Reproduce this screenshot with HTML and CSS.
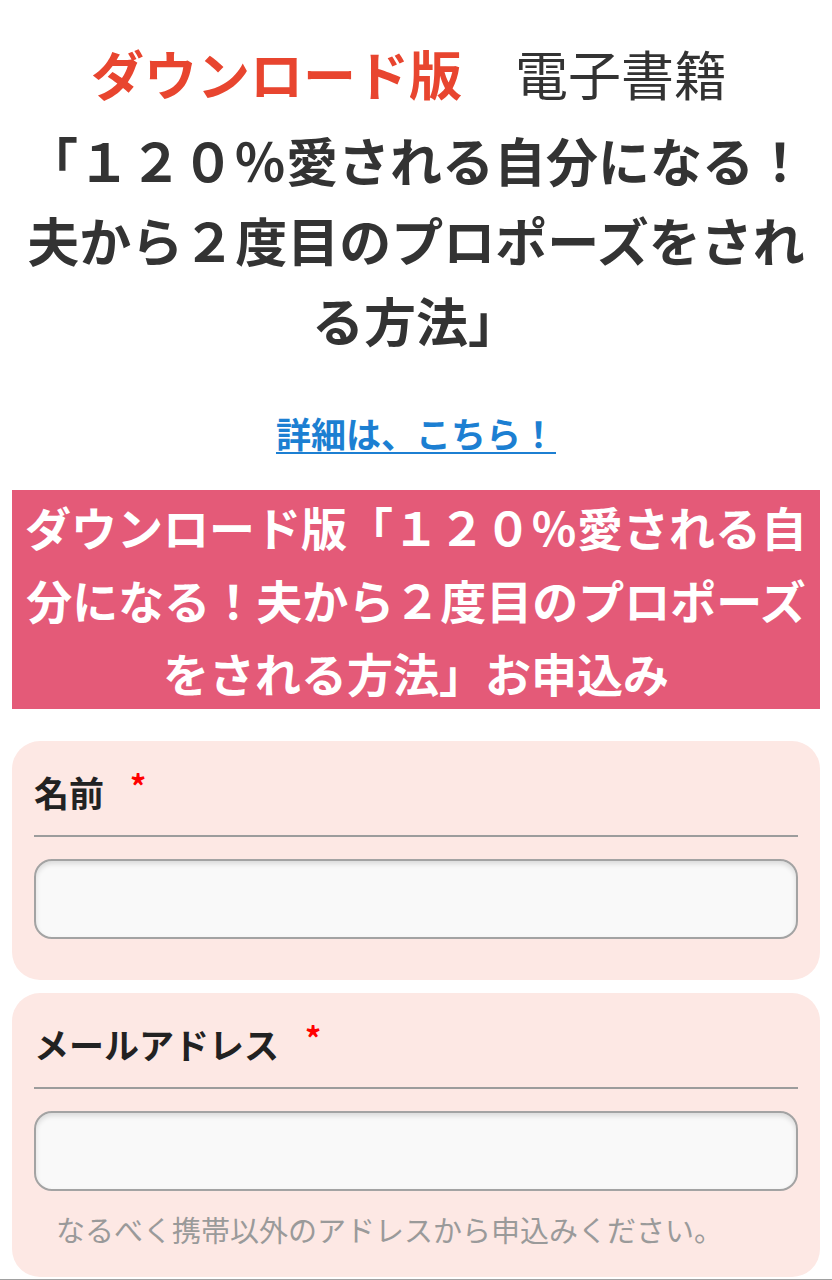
FILE: index.html
```html
<!DOCTYPE html>
<html lang="ja">
<head>
<meta charset="utf-8">
<title>ダウンロード版 電子書籍</title>
<link rel="stylesheet" href="styles.css">
</head>
<body>
<div class="page">
  <h1 class="title">
    <span class="title-top"><span class="red">ダウンロード版</span>　<span class="light">電子書籍</span></span>
    <span class="title-main">「１２０％愛される自分になる！夫から２度目のプロポーズをされる方法」</span>
  </h1>
  <p class="more"><a href="#" class="more-link">詳細は、こちら！</a></p>
  <div class="banner">ダウンロード版「１２０％愛される自分になる！夫から２度目のプロポーズをされる方法」お申込み</div>
  <form class="form">
    <div class="card">
      <div class="label">名前<span class="req">*</span></div>
      <input class="field" type="text">
    </div>
    <div class="card card-last">
      <div class="label">メールアドレス<span class="req">*</span></div>
      <input class="field" type="email">
      <p class="help">なるべく携帯以外のアドレスから申込みください。</p>
    </div>
  </form>
  <div class="bottom-rule"></div>
</div>
</body>
</html>
```

FILE: styles.css
```css
html, body {
  margin: 0;
  padding: 0;
  background: #ffffff;
}
body {
  font-family: "Noto Sans CJK JP", "Noto Sans", sans-serif;
  color: #333333;
}
.page {
  width: 832px;
  padding: 0 12px;
  box-sizing: border-box;
}
.title {
  margin: 0;
  padding-top: 33px;
  text-align: center;
  font-size: 52px;
  font-weight: bold;
  line-height: 80px;
  color: #333333;
}
.title-top {
  display: block;
  font-size: 53px;
  margin-bottom: 7px;
  padding-right: 14px;
}
.title-main {
  display: block;
}
.red {
  color: #e8452f;
}
.light {
  font-weight: normal;
  color: #333333;
}
.more {
  margin: 47px 0 0;
  text-align: center;
  font-size: 35px;
  line-height: 52px;
}
.more-link {
  color: #1c7fd2;
  font-weight: bold;
  text-decoration: underline;
  text-decoration-thickness: 2px;
  text-underline-offset: 4px;
}
.banner {
  margin-top: 31px;
  background: #e45a78;
  color: #ffffff;
  font-size: 46px;
  font-weight: bold;
  line-height: 73px;
  text-align: center;
}
.form {
  margin: 32px 0 0;
  display: flex;
  flex-direction: column;
  gap: 13px;
}
.card {
  background: #fde8e4;
  border-radius: 28px;
  padding: 19px 22px 41px;
}
.label {
  font-size: 35px;
  font-weight: bold;
  line-height: 50px;
  color: #222222;
  padding-bottom: 18px;
  border-bottom: 2px solid #9c9c9c;
  margin-bottom: 22px;
}
.req {
  color: #ff0000;
  font-size: 32px;
  margin-left: 26px;
  vertical-align: 8px;
}
.field {
  display: block;
  width: 100%;
  height: 80px;
  box-sizing: border-box;
  margin: 0;
  background: #f9f9f9;
  border: 2px solid #a3a3a3;
  border-radius: 18px;
  box-shadow: inset 0 3px 5px rgba(0, 0, 0, 0.12);
  font-size: 28px;
  padding: 0 16px;
  outline: none;
}
.help {
  margin: 18px 0 0;
  padding-left: 22px;
  font-size: 29px;
  line-height: 40px;
  color: #9a9a9a;
}
.card-last {
  padding-bottom: 28px;
}
.bottom-rule {
  margin-top: 2px;
  margin-left: -12px;
  margin-right: -12px;
  border-top: 2px solid #a0a0a0;
}
```
